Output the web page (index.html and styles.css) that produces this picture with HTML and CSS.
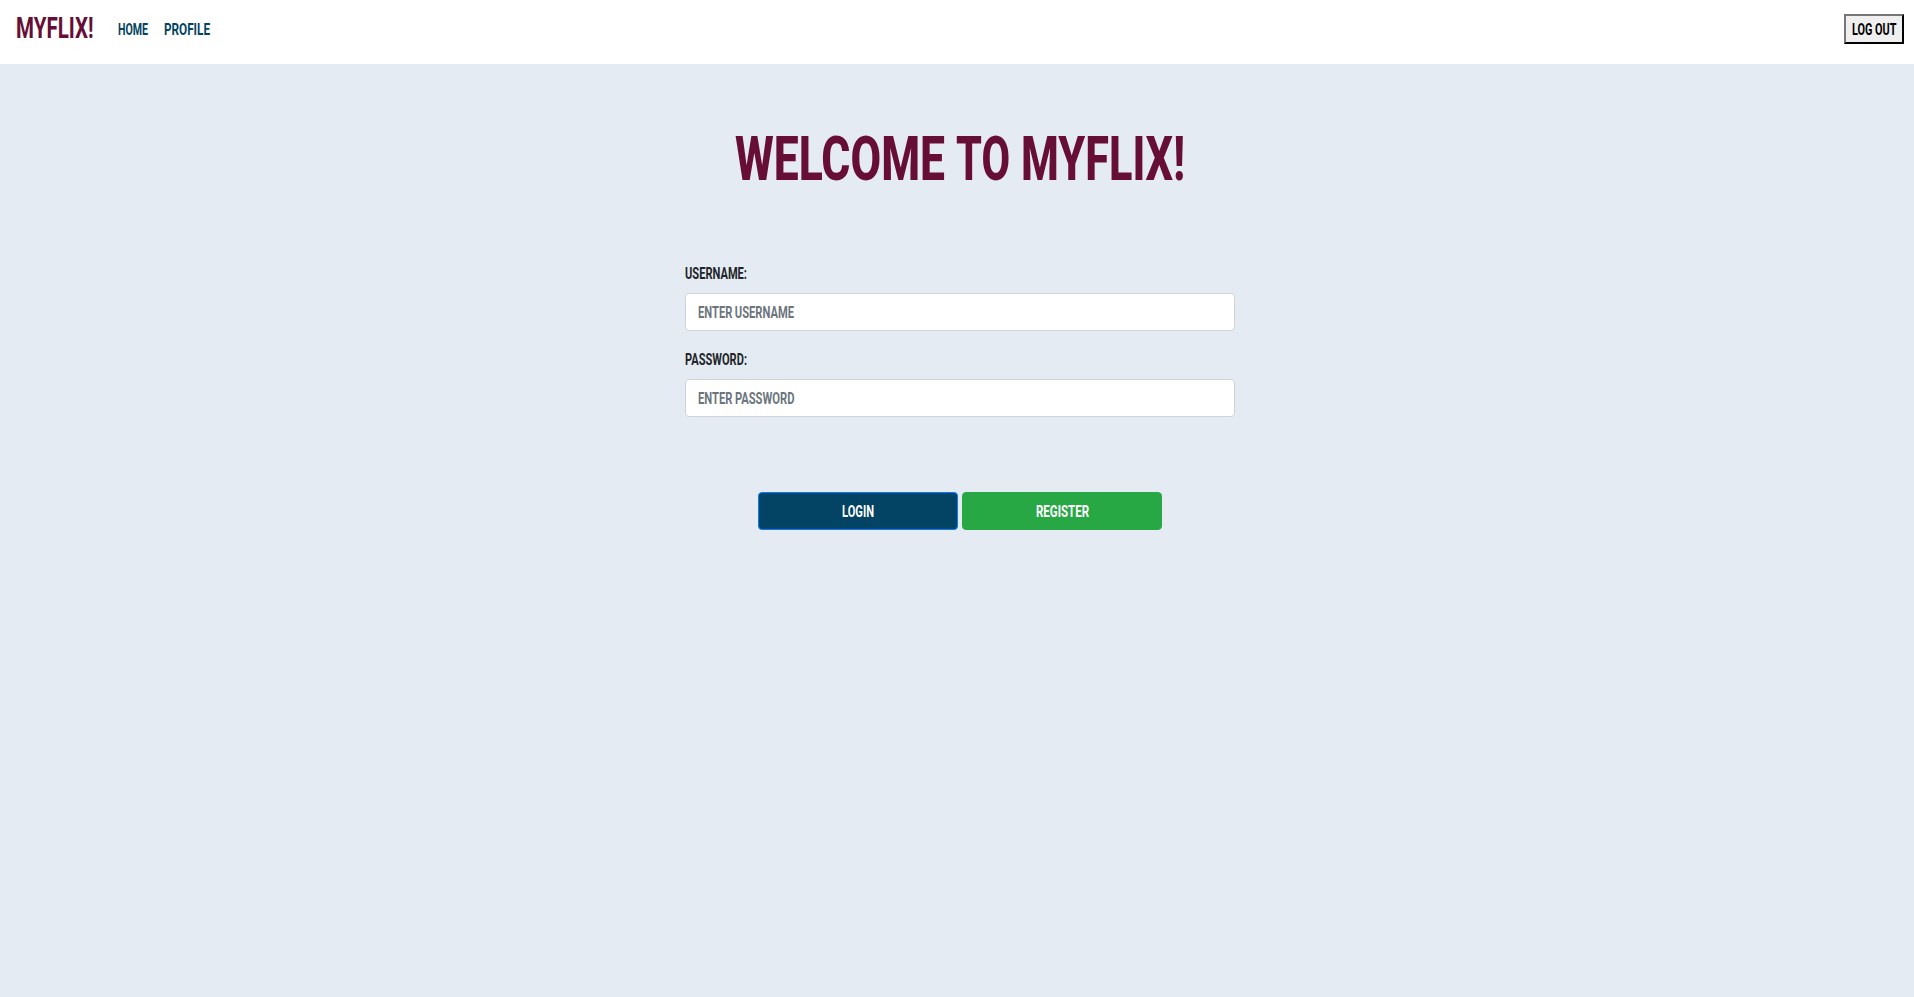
FILE: index.html
```html
<!DOCTYPE html>
<html lang="en">
<head>
<meta charset="utf-8">
<title>myFlix</title>
<link rel="stylesheet" href="styles.css">
</head>
<body>
<nav class="navbar">
  <a class="brand"><span class="t" data-w="77.5">MYFLIX!</span></a>
  <a class="link home"><span class="t" data-w="30">HOME</span></a>
  <a class="link"><span class="t" data-w="46">PROFILE</span></a>
  <button class="logout"><span class="t" data-w="44.5">LOG OUT</span></button>
</nav>
<main class="page">
  <h1 class="title"><span class="t" data-w="210">WELCOME</span> <span class="t" data-w="54">TO</span> <span class="t" data-w="164">MYFLIX!</span></h1>
  <form class="form">
    <label class="label" for="user"><span class="t" data-w="62">USERNAME:</span></label>
    <div class="field"><input class="input" id="user" type="text"><span class="hint"><span class="t" data-w="96">ENTER USERNAME</span></span></div>
    <label class="label" for="pass"><span class="t" data-w="62">PASSWORD:</span></label>
    <div class="field"><input class="input" id="pass" type="password"><span class="hint"><span class="t" data-w="96.5">ENTER PASSWORD</span></span></div>
    <div class="actions">
      <button type="button" class="btn login"><span class="t" data-w="32">LOGIN</span></button>
      <button type="button" class="btn register"><span class="t" data-w="53">REGISTER</span></button>
    </div>
  </form>
</main>
<script src="fit.js"></script>
</body>
</html>
```
FILE: styles.css
```css
* { box-sizing: border-box; }
body {
  margin: 0;
  min-height: 100vh;
  background: #e4ebf2;
  font-family: Roboto, "Liberation Sans", sans-serif;
  font-size: 15.7px;
  font-weight: 750;
  line-height: 25px;
  color: #212529;
  word-spacing: -0.5px;
}
.t {
  display: inline-block;
  white-space: nowrap;
  transform-origin: 0 50%;
}
.navbar {
  display: flex;
  align-items: flex-start;
  height: 64px;
  padding: 14px 10px 0 16px;
  background: #fff;
}
.brand {
  margin-right: 24px;
  font-size: 29.5px;
  line-height: 28px;
  color: #670e36;
}
.link {
  padding-top: 3px;
  color: #034363;
}
.home { margin-right: 16px; }
.logout {
  width: 60px;
  height: 30px;
  margin-left: auto;
  padding: 0 0 0 6px;
  border: 2px outset #000;
  border-color: #767676 #212121 #212121 #767676;
  background: #efefef;
  font: inherit;
  text-align: left;
  color: #000;
}
.page {
  display: flex;
  flex-direction: column;
  align-items: center;
  padding: 58px 0 0 6px;
}
.title {
  display: flex;
  gap: 11px;
  margin: 0;
  font-size: 62px;
  font-weight: 850;
  line-height: 74px;
  color: #670e36;
}
.form {
  width: 550px;
  padding-top: 65px;
}
.label {
  display: block;
  height: 32px;
}
.field {
  position: relative;
  height: 38px;
  margin-bottom: 16px;
}
.input {
  display: block;
  width: 100%;
  height: 38px;
  padding: 6px 12px;
  border: 1px solid #ced4da;
  border-radius: 4px;
  background: #fff;
}
.hint {
  position: absolute;
  top: 7px;
  left: 13px;
  color: #6c757d;
  pointer-events: none;
}
.actions {
  display: flex;
  justify-content: center;
  gap: 4px;
  padding-top: 59px;
}
.btn {
  width: 200px;
  height: 38px;
  padding: 0;
  border: 1px solid #28a745;
  border-radius: 4px;
  background: #28a745;
  font: inherit;
  color: #fff;
}
.login {
  border-color: #007bff;
  background: #034363;
}
```
FILE: fit.js
```js
// Condenses each text run to its set width.
document.querySelectorAll(".t").forEach(function (el) {
  var target = Number(el.dataset.w);
  var natural = el.getBoundingClientRect().width;
  el.style.width = target + "px";
  el.style.textAlign = "left";
  el.style.transform = "none";
  var inner = document.createElement("span");
  inner.className = "t";
  inner.textContent = el.textContent;
  inner.style.transform = "scaleX(" + target / natural + ")";
  el.replaceChildren(inner);
});
```
